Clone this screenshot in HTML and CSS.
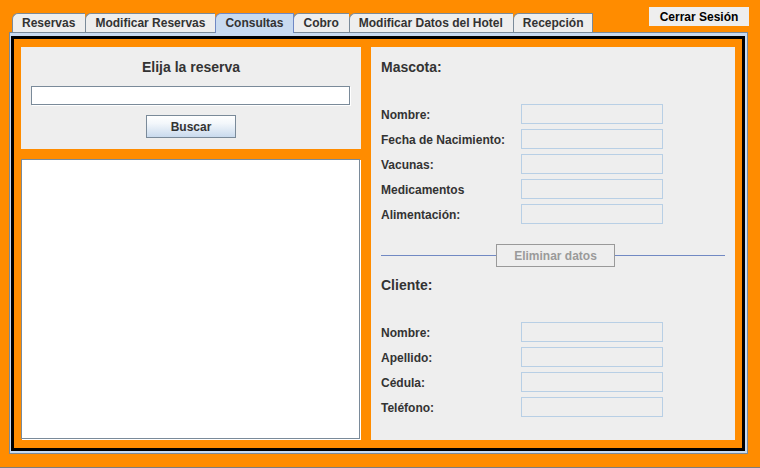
FILE: index.html
```html
<!DOCTYPE html>
<html lang="es">
<head>
<meta charset="utf-8">
<title>Consultas</title>
<link rel="stylesheet" href="styles.css">
</head>
<body>
<div class="window">
  <div class="top">
    <div class="tabs">
      <div class="tab">Reservas</div>
      <div class="tab">Modificar Reservas</div>
      <div class="tab selected">Consultas</div>
      <div class="tab">Cobro</div>
      <div class="tab">Modificar Datos del Hotel</div>
      <div class="tab last">Recepción</div>
    </div>
    <button class="logout">Cerrar Sesión</button>
  </div>
  <div class="pane">
    <div class="content">
      <div class="left">
        <div class="search">
          <h2 class="search-title">Elija la reserva</h2>
          <div class="search-field"></div>
          <button class="search-btn">Buscar</button>
        </div>
        <div class="list"></div>
      </div>
      <div class="details">
        <h3 class="section-title">Mascota:</h3>
        <div class="fields">
          <span class="label">Nombre:</span><span class="field"></span>
          <span class="label">Fecha de Nacimiento:</span><span class="field"></span>
          <span class="label">Vacunas:</span><span class="field"></span>
          <span class="label">Medicamentos</span><span class="field"></span>
          <span class="label">Alimentación:</span><span class="field"></span>
        </div>
        <div class="sep"><button class="delete-btn">Eliminar datos</button></div>
        <h3 class="section-title client">Cliente:</h3>
        <div class="fields">
          <span class="label">Nombre:</span><span class="field"></span>
          <span class="label">Apellido:</span><span class="field"></span>
          <span class="label">Cédula:</span><span class="field"></span>
          <span class="label">Teléfono:</span><span class="field"></span>
        </div>
      </div>
    </div>
  </div>
</div>
</body>
</html>
```
FILE: styles.css
```css
* { box-sizing: border-box; }
html, body { margin: 0; padding: 0; }
body {
  font-family: "Liberation Sans", Arial, sans-serif;
  background: #ff8c00;
}
.window {
  width: 760px;
  height: 468px;
  background: #ff8c00;
  border-bottom: 1px solid #7d7d7d;
  overflow: hidden;
}
.top {
  display: flex;
  height: 32px;
  padding: 0 11px 0 12px;
}
.tabs {
  display: flex;
  align-self: flex-end;
  height: 19px;
}
.tab {
  height: 19px;
  line-height: 18px;
  padding: 0 10px 0 9px;
  border-left: 1px solid #7a8a99;
  border-top: 1px solid #7a8a99;
  border-top-left-radius: 6px;
  background: #eeeeee;
  color: #333333;
  font-size: 12px;
  font-weight: bold;
  white-space: nowrap;
}
.tab.last { border-right: 1px solid #7a8a99; padding-right: 8px; }
.tab.selected {
  position: relative;
  z-index: 1;
  background: #c8daf0;
  border-color: #6f88c4;
  border-right: 1px solid #6f88c4;
  margin-right: -1px;
  height: 20px;
  margin-bottom: -1px;
}
.logout {
  margin: 7px 0 0 auto;
  width: 100px;
  height: 19px;
  padding: 0;
  border: none;
  background: #eeeeee;
  color: #000;
  font-family: inherit;
  font-size: 12px;
  font-weight: bold;
}
.pane {
  margin: 0 12px 0 9px;
  height: 422px;
  border: 1px solid #7a8a99;
  background: #c8daf0;
  padding: 3px 2px 2px 1px;
}
.content {
  height: 100%;
  border: 3px solid #000;
  background: #ff8c00;
  padding: 8px 7px;
  display: grid;
  grid-template-columns: 340px 364px;
  column-gap: 10px;
}
.left {
  display: flex;
  flex-direction: column;
  gap: 10px;
}
.search {
  height: 102px;
  background: #eeeeee;
  display: flex;
  flex-direction: column;
  align-items: center;
  padding-top: 12px;
}
.search-title {
  margin: 0;
  font-size: 14px;
  line-height: 17px;
  font-weight: bold;
  color: #333333;
}
.search-field {
  margin-top: 10px;
  width: 319px;
  height: 19px;
  background: #fff;
  border: 1px solid #7a8a99;
  box-shadow: 1px 1px 0 #fff;
  margin-right: 1px;
}
.search-btn {
  margin-top: 10px;
  width: 90px;
  height: 23px;
  padding: 0;
  border: 1px solid #7a8a99;
  background: linear-gradient(#ffffff 0%, #f3f7fb 35%, #c9daed 100%);
  color: #333333;
  font-family: inherit;
  font-size: 12px;
  font-weight: bold;
}
.list {
  flex: 1;
  width: 339px;
  margin-bottom: 1px;
  background: #fff;
  border: 1px solid #7a8a99;
  box-shadow: 1px 1px 0 #fff;
}
.details {
  background: #eeeeee;
  padding: 12px 10px 0 10px;
}
.section-title {
  margin: 0 0 28px 0;
  font-size: 14px;
  line-height: 17px;
  font-weight: bold;
  color: #333333;
}
.section-title.client { margin-top: 10px; }
.fields {
  display: grid;
  grid-template-columns: 140px 142px;
  grid-auto-rows: 20px;
  row-gap: 5px;
}
.label {
  align-self: center;
  padding-top: 2px;
  font-size: 12px;
  font-weight: bold;
  color: #333333;
  white-space: nowrap;
}
.field {
  border: 1px solid #b8cfe5;
  background: #eeeeee;
}
.sep {
  margin-top: 20px;
  display: flex;
  align-items: center;
  height: 23px;
}
.sep::before {
  content: "";
  width: 115px;
  height: 1px;
  background: #7189c3;
}
.sep::after {
  content: "";
  flex: 1;
  height: 1px;
  background: #7189c3;
}
.delete-btn {
  width: 119px;
  height: 23px;
  padding: 0;
  border: 1px solid #999999;
  background: #eeeeee;
  color: #9a9a9a;
  font-family: inherit;
  font-size: 12px;
  font-weight: bold;
}
```
